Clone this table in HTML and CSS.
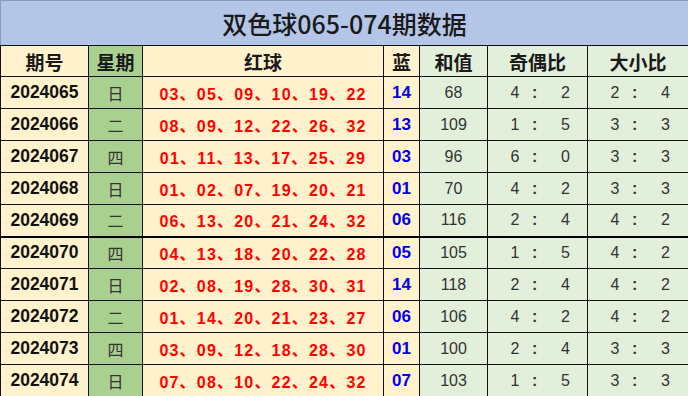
FILE: index.html
```html
<!DOCTYPE html>
<html lang="zh">
<head>
<meta charset="utf-8">
<link rel="stylesheet" href="styles.css">
</head>
<body>
<table class="tbl">
  <colgroup>
    <col class="c1"><col class="c2"><col class="c3"><col class="c4"><col class="c5"><col class="c6"><col class="c7">
  </colgroup>
  <tr class="title-row"><td colspan="7" class="title">双色球065-074期数据</td></tr>
  <tr class="head">
    <td class="y">期号</td><td class="g">星期</td><td class="y">红球</td><td class="y">蓝</td><td class="l">和值</td><td class="l">奇偶比</td><td class="l">大小比</td>
  </tr>
  <tr class="row"><td class="y no">2024065</td><td class="g wd">日</td><td class="y red">03、05、09、10、19、22</td><td class="y blue">14</td><td class="l sum">68</td><td class="l r"><span>4</span><b>:</b><span>2</span></td><td class="l r"><span>2</span><b>:</b><span>4</span></td></tr>
  <tr class="row"><td class="y no">2024066</td><td class="g wd">二</td><td class="y red">08、09、12、22、26、32</td><td class="y blue">13</td><td class="l sum">109</td><td class="l r"><span>1</span><b>:</b><span>5</span></td><td class="l r"><span>3</span><b>:</b><span>3</span></td></tr>
  <tr class="row"><td class="y no">2024067</td><td class="g wd">四</td><td class="y red">01、11、13、17、25、29</td><td class="y blue">03</td><td class="l sum">96</td><td class="l r"><span>6</span><b>:</b><span>0</span></td><td class="l r"><span>3</span><b>:</b><span>3</span></td></tr>
  <tr class="row"><td class="y no">2024068</td><td class="g wd">日</td><td class="y red">01、02、07、19、20、21</td><td class="y blue">01</td><td class="l sum">70</td><td class="l r"><span>4</span><b>:</b><span>2</span></td><td class="l r"><span>3</span><b>:</b><span>3</span></td></tr>
  <tr class="row split"><td class="y no">2024069</td><td class="g wd">二</td><td class="y red">06、13、20、21、24、32</td><td class="y blue">06</td><td class="l sum">116</td><td class="l r"><span>2</span><b>:</b><span>4</span></td><td class="l r"><span>4</span><b>:</b><span>2</span></td></tr>
  <tr class="row"><td class="y no">2024070</td><td class="g wd">四</td><td class="y red">04、13、18、20、22、28</td><td class="y blue">05</td><td class="l sum">105</td><td class="l r"><span>1</span><b>:</b><span>5</span></td><td class="l r"><span>4</span><b>:</b><span>2</span></td></tr>
  <tr class="row"><td class="y no">2024071</td><td class="g wd">日</td><td class="y red">02、08、19、28、30、31</td><td class="y blue">14</td><td class="l sum">118</td><td class="l r"><span>2</span><b>:</b><span>4</span></td><td class="l r"><span>4</span><b>:</b><span>2</span></td></tr>
  <tr class="row"><td class="y no">2024072</td><td class="g wd">二</td><td class="y red">01、14、20、21、23、27</td><td class="y blue">06</td><td class="l sum">106</td><td class="l r"><span>4</span><b>:</b><span>2</span></td><td class="l r"><span>4</span><b>:</b><span>2</span></td></tr>
  <tr class="row"><td class="y no">2024073</td><td class="g wd">四</td><td class="y red">03、09、12、18、28、30</td><td class="y blue">01</td><td class="l sum">100</td><td class="l r"><span>2</span><b>:</b><span>4</span></td><td class="l r"><span>3</span><b>:</b><span>3</span></td></tr>
  <tr class="row"><td class="y no">2024074</td><td class="g wd">日</td><td class="y red">07、08、10、22、24、32</td><td class="y blue">07</td><td class="l sum">103</td><td class="l r"><span>1</span><b>:</b><span>5</span></td><td class="l r"><span>3</span><b>:</b><span>3</span></td></tr>
</table>
</body>
</html>
```
FILE: styles.css
```css
html, body {
  margin: 0;
  padding: 0;
  background: #ffffff;
}
.tbl {
  width: 688px;
  height: 396px;
  table-layout: fixed;
  border-collapse: collapse;
  font-family: "Liberation Sans", "Noto Sans CJK SC", sans-serif;
}
.c1 { width: 88px; }
.c2 { width: 54px; }
.c3 { width: 241px; }
.c4 { width: 36px; }
.c5 { width: 68px; }
.c6 { width: 100px; }
.c7 { width: 101px; }
.tbl td {
  border: 1px solid #111;
  padding: 0;
  text-align: center;
  vertical-align: middle;
  white-space: nowrap;
  overflow: hidden;
}
.title-row { height: 45px; }
.title {
  background: #b4c6e7;
  font-family: "Noto Sans CJK SC", sans-serif;
  font-size: 25px;
  font-weight: 500;
  color: #1a1a1a;
  border-color: #8a9bb8 #8a9bb8 #111 #8a9bb8 !important;
}
.head { height: 31px; }
.head td {
  font-family: "Noto Sans CJK SC", sans-serif;
  font-size: 19px;
  font-weight: 700;
  color: #1a1a1a;
}
.row { height: 32px; }
.split td { border-bottom: 2px solid #000; }
.y { background: #fff2cc; }
.g { background: #a9d08e; }
.l { background: #e2efda; }
.no {
  font-size: 17.5px;
  font-weight: 700;
  color: #111;
}
.wd {
  font-family: "Noto Sans CJK SC", sans-serif;
  font-size: 16px;
  color: #333;
}
.red {
  font-size: 16px;
  font-weight: 700;
  color: #ff0000;
  letter-spacing: 1.2px;
}
.blue {
  font-size: 17px;
  font-weight: 700;
  color: #0000ee;
}
.sum {
  font-size: 16px;
  color: #333;
}
.tbl .r {
  font-size: 16px;
  color: #333;
  text-align: left;
  padding-left: 22px;
}
.r span { display: inline-block; width: 10px; text-align: center; }
.r b {
  display: inline-block;
  font-weight: 700;
  margin: 0 23px 0 12px;
}
```
